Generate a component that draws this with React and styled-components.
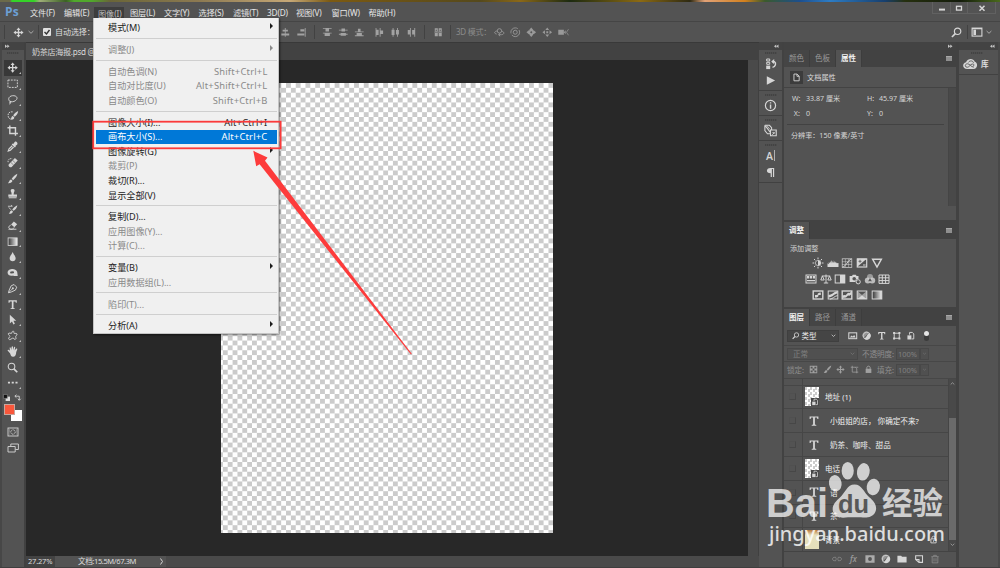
import React from 'react';
import styled, { createGlobalStyle } from 'styled-components';

const Global = createGlobalStyle`
  * { box-sizing: border-box; }
  html, body { margin: 0; padding: 0; background: #535353; overflow: hidden; }
  body { font-family: "Noto Sans", "Noto Sans CJK SC", sans-serif; font-size: 8px; color: #e0e0e0; white-space: nowrap; }
`;

/* ---------- icons, each on a 12x12 grid ---------- */
const S = { fill: 'none', stroke: 'currentColor', strokeWidth: 1 };
const MOVE = <path fill="currentColor" d="M6 .5 8.2 3.2H6.7V5.3H8.8V3.8L11.5 6 8.8 8.2V6.7H6.7V8.8H8.2L6 11.5 3.8 8.8H5.3V6.7H3.2V8.2L.5 6 3.2 3.8V5.3H5.3V3.2H3.8Z" />;
const T_ICON = <path fill="currentColor" d="M1.6 1.4H10.4V4H9.4L8.9 2.6H6.9V9.6L8.3 10V10.7H3.7V10L5.1 9.6V2.6H3.1L2.6 4H1.6Z" />;
const BRUSH = <><path fill="currentColor" d="M11 .8C8.5 2 6 4.4 5 6.2L6.5 7.6C8.6 6 10.8 3.2 11 .8Z" /><path fill="currentColor" d="M4.4 6.8 5.8 8.2C5.5 10 3.6 11 1 10.8 2.4 9.8 2.2 7.2 4.4 6.8Z" /></>;
const ICONS = {
  move: MOVE,
  marquee: <rect x="1" y="2.2" width="10" height="7.8" {...S} strokeDasharray="2 1.1" />,
  lasso: <path {...S} d="M4 8.2C.5 7 1.2 2.2 6 1.8 10 1.5 11.5 4 10.2 5.8 9 7.8 6 8.6 4 8.2 2.4 7.5 2 9.2 3.6 9.2 4.6 9 4 7.5 3.2 7.4M3.6 9.2 2.8 11" />,
  quick: <><path {...S} strokeDasharray="1.6 1" d="M6 2C2 1.5 .8 4 1.2 6.5 1.6 9 3.5 10 5.4 9.6" /><path fill="currentColor" d="M11.8 1C9.3 2.2 7.4 4.2 6.6 5.8L8.2 7.2C10.200 5.600 11.700 3.400 11.800 1ZM6.100 6.300 7.700 7.700C7.900 9.900 5.800 10.600 3.600 10 5 9.200 4.300 6.700 6.100 6.300Z" /></>,
  crop: <path {...S} strokeWidth="1.5" d="M3 .5V9H11.6M.5 3H9V11.5" />,
  dropper: <><path fill="currentColor" d="M8.2 1C9.4-.2 12 2 10.9 3.6L8.9 5.4 9.4 6 8.3 7 5 3.8 6 2.7 6.6 3.2Z" /><path {...S} strokeWidth="1.300" d="M5.6 5 2.2 8.4 1.4 10.6 3.6 9.8 7 6.4" /></>,
  heal: <><path fill="currentColor" d="M8.400 1 11.400 3.800 5 10.500C3.400 12 .6 9.300 2 7.700Z" /><path stroke="#535353" strokeWidth=".6" d="m6 3.600 3 2.800M4 5.700l3 2.800" /><path {...S} strokeDasharray="1.3 .8" d="M1.2 5.5C.5 3 3 1 5.5 2" /></>,
  brush: BRUSH,
  stamp: <path fill="currentColor" d="M6 1C8.3 1 8.5 3 7.4 4.5L7 7H10.6V9.2H1.4V7H5L4.6 4.5C3.5 3 3.7 1 6 1ZM1.8 9.9H10.2V10.9H1.8Z" />,
  history: <><path fill="currentColor" d="M11 1.2C8.6 2.4 6.6 4.3 5.6 6L7 7.3C9 5.8 10.9 3.5 11 1.2ZM5 6.6 6.3 7.9C6 9.8 4 10.8 1.8 10.4 3.2 9.4 2.9 7.1 5 6.6Z" /><path {...S} strokeWidth=".9" d="M1 2.4H5.6L4.4 1M2 3.6 4 6" /></>,
  eraser: <><path fill="currentColor" d="M7.3 1.7 10.8 4.6 7.8 7.8 4.4 4.7Z" /><path {...S} d="M4 5 1.6 7.6 3.6 9.8H5.8L7.6 7.9M1.6 9.8H10" /></>,
  grad: <><defs><linearGradient id="tg"><stop stopColor="#333" /><stop offset="1" stopColor="#f0f0f0" /></linearGradient></defs><rect x="1.2" y="2" width="9.6" height="8" fill="url(#tg)" stroke="currentColor" strokeWidth=".9" /></>,
  drop: <path fill="currentColor" d="M6 1C7 3.6 9.2 5.4 9.2 7.8 9.2 9.8 7.8 11 6 11S2.8 9.8 2.8 7.8C2.8 5.4 5 3.6 6 1Z" />,
  dodge: <path fill="currentColor" fillRule="evenodd" d="M4.2 2.300C7 1.500 9.600 2.700 10.800 5L11.400 9.600H7.200L6.600 8.900C4 9.700.6 8.800.6 5.800.6 4 2.400 2.500 4.200 2.300ZM4 4.8C3 5 3 6.8 4.2 6.9L7 6.6C8 6 7.4 4.6 6.4 4.6Z" />,
  pen: <><path {...S} d="M7.5 1.6 10.3 4.4 9 7.5 4.4 9.6 1.5 10.4 2.4 7.4 4.4 3Z" /><path {...S} strokeWidth=".8" d="M2 10 5.6 6.3" /><circle cx="6.2" cy="5.7" r="1.1" fill="currentColor" /></>,
  type: T_ICON,
  arrow: <path fill="currentColor" d="M3 .8 9.8 7.2H6.8L8.4 10.4 6.8 11.1 5.3 7.9 3 10Z" />,
  shape: <path {...S} d="M6.8 1.2C8 1.8 6.6 4 8.2 3.8 10 3 11.2 4.2 10.4 5.4 8.8 6.4 9.2 7 9.6 9 9 10.6 7.4 10 6.8 8.6 5.4 8.4 5.2 9.6 2.8 10.2.8 9.8 2 8 3.2 7 3 5.6 1.2 5.4 1.4 3.8 2.4 2.6 4 4 5 3.4 5.4 2.2 5.6 1 6.8 1.2Z" />,
  hand: <path fill="currentColor" d="M3.2 7.600.6 4.900C.6 3.700 2.100 3.900 3.200 5.100L2.800 2.100C3 .9 4.200 1.200 4.500 4.400L4.900 1C5.300 0 6.300.2 6.400 1.200V4.300L7.400 1.300C7.900.4 8.800.8 8.700 1.800L8.100 4.700 9.600 2.900C10.400 2.200 11.200 2.900 10.800 3.900L9.800 6.300C9.700 9.300 8.700 11.500 6.400 11.500 4.300 11.500 3.900 9.600 3.200 7.600Z" />,
  zoom: <><circle cx="4.8" cy="4.8" r="3.5" {...S} strokeWidth="1.100" /><path {...S} strokeWidth="1.8" d="m7.3 7.3 3.6 3.6" /></>,
  dots: <path fill="currentColor" d="M1 5H3.2V7H1ZM5 5H7.2V7H5ZM9 5H11.2V7H9Z" />,
  mask: <><rect x="1" y="2" width="10" height="8" {...S} strokeWidth=".9" /><circle cx="6" cy="6" r="2.2" {...S} strokeWidth=".9" strokeDasharray="1 .5" /><path {...S} strokeWidth=".5" strokeDasharray=".6 .6" d="M2.5 3V9M9.5 3V9" /></>,
  screen: <path {...S} strokeWidth=".9" d="M3.8 4V2H11.4V7.5H8.5M1 4.5H8.2V10H1Z" />,
  alignC: <path fill="currentColor" d="M5.5 1h1v10h-1ZM3 3h6v2.2H3ZM1.5 7.5h9V9.7h-9Z" />,
  alignR: <path fill="currentColor" d="M10 1h1v10h-1ZM5 2.7h4.5V5H5ZM1.5 7.3h8V9.6h-8Z" />,
  distT: <path fill="currentColor" d="M1 1h10v1H1ZM1 6.500h10v1H1ZM4 2h4v3H4ZM3 7.500h6v2.800H3Z" />,
  distM: <path fill="currentColor" d="M1 3h10v1H1ZM1 7.8h10v1H1ZM4 1.600h4v3.600H4ZM3 6.900h6v3H3Z" />,
  distB: <path fill="currentColor" d="M1 5h10v1H1ZM1 9.500h10v1H1ZM4.500 2h3V5h-3ZM3 6.900h6v2.600H3Z" />,
  distL: <path fill="currentColor" d="M1.8 1h1v10h-1ZM6.5 1h1v10h-1ZM2.8 3h2.5v6H2.8ZM7.5 4h2.900v4H7.5Z" />,
  distC: <path fill="currentColor" d="M3 1h1v10H3ZM8 1h1v10H8ZM1.8 3h3.4v6H1.8ZM6.8 3.5h3.4v5H6.8Z" />,
  distR: <path fill="currentColor" d="M4.5 1h1v10h-1ZM9.5 1h1v10h-1ZM2 3.5h2.5v5H2ZM7 3.5h2.5v5H7Z" />,
  auto: <path fill="currentColor" fillRule="evenodd" d="M2 1.5h3.5v9H2ZM6.5 1.5H10v9H6.5ZM3 3h1.5v1.2H3ZM7.6 3h1.4v1.2H7.6ZM1.5 5.5h9v.8h-9Z" />,
  orbit: <><path {...S} d="M3 8C-.5 7.5.3 4.5 4 4.600M8.8 4.8C12.200 5.500 12 8.600 8.400 8.800H5.600M7 7.200 5.200 8.800 7 10.500" /><circle cx="6.2" cy="4.4" r="2.5" {...S} /></>,
  roll: <><circle cx="6" cy="6" r="5" {...S} strokeDasharray="12 2" /><circle cx="6" cy="6" r="2.300" {...S} /></>,
  slide: <path fill="currentColor" fillRule="evenodd" d="M6 .5 8.200 3.200 8 4 8.800 3.800 11.500 6 8.800 8.200 8 8 8.200 8.800 6 11.500 3.800 8.800 4 8 3.200 8.200.5 6 3.200 3.800 4 4 3.800 3.200ZM6 4.700 4.700 6 6 7.300 7.300 6Z" />,
  pan3d: <path fill="currentColor" d="M6 .5 8.200 3.400H3.800ZM6 11.500 3.800 8.600H8.200ZM.5 6 3.400 3.800V8.200ZM11.500 6 8.600 8.200V3.800ZM4.900 4.900h2.200v2.200H4.900Z" />,
  cam: <><path fill="currentColor" d="M.3 3.200H6.700V8.800H.3ZM6.7 6 8.700 3.700V8.300Z" /><path {...S} strokeWidth=".8" d="M12 2.5 9.700 6 12 9.5" /></>,
  search: <><circle cx="7.2" cy="4.7" r="3.5" {...S} strokeWidth="1.3" /><path {...S} strokeWidth="1.8" d="M4.7 7.2 1 10.900" /></>,
  work: <><rect x="1.1" y="2.1" width="9.8" height="8" {...S} strokeWidth="1.1" /><path fill="currentColor" d="M2.4 3.8H5V9H2.4ZM1 2h10v1.2H1Z" /></>,
  down: <path {...S} d="m3.6 5 2.4 2.3L8.4 5" />,
  up: <path {...S} d="m3.6 7.3 2.4-2.3 2.4 2.3" />,
  hist2: <><path fill="currentColor" d="M1.2 7.6h4v3.5h-4Z" /><path {...S} d="M1.7 1h3v2h-3ZM1.7 4.3h3v2h-3Z" /><path {...S} strokeWidth="1.400" d="M7 3.6H9.4C11.6 5 10.6 8.6 7.5 9.400" /><path fill="currentColor" d="M6.2 3.6 9.200 1V6.200Z" /></>,
  play: <path fill="currentColor" d="M2 1.300 11 6 2 10.700Z" />,
  info: <><circle cx="6" cy="6" r="4.7" {...S} strokeWidth="1.100" /><path fill="currentColor" d="M5.4 2.9h1.3v1.3H5.4ZM5.4 5h1.3v4H5.4Z" /></>,
  presets: <><path {...S} d="M.8 1.2H5L7 3.4V6M.8 1.2V6L3.2 9H6M1.5 2 6 8M6 5.6H11.3V10.8H6ZM8 7.5l1.5 1.6" /><path {...S} strokeWidth=".7" d="M10.5 7.2 7 10.400M2.500 1.200 5.500 5" /></>,
  para: <path fill="currentColor" d="M10 1V11H8.7V2.2H7.5V11H6.2V6.8C.8 6.8.8 1 6 1Z" />,
  doc: <path {...S} strokeWidth="1.2" d="M2.6 1.4H6.8L9.6 4.2V10.4H2.6ZM6.6 1.4V4.4H9.6" />,
  cc: <><path fill="currentColor" d="M3.500 10.300C-.6 10.300-1 5.300 2.600 4.600 4 1 8.800.8 10.100 4 13 4.800 12.800 10 9 10.300Z" /><path fill="none" stroke="#5a5a5a" strokeWidth=".8" d="M9.300 8.700C6.800 8.600 5.800 5.800 3.800 5.800 1.400 5.900 1.400 8.800 3.600 8.800 5.800 8.700 6 6 8.300 6 9.700 6.100 9.800 7.500 8.600 7.600M4.600 4.700C5.800 2.700 8.600 3 9 5" /></>,
  sun: <><path {...S} d="M6 .5V2.3M6 9.7v1.8M.5 6H2.3M9.7 6h1.8M2 2l1.3 1.3M8.7 8.7 10 10M10 2 8.7 3.3M3.3 8.7 2 10" /><path fill="currentColor" d="M6 3A3 3 0 0 1 6 9Z" /><path {...S} strokeWidth=".7" d="M6 3.400A2.600 2.600 0 0 0 6 8.600" /></>,
  levels: <path fill="currentColor" d="M.5 10V6.2l1.3 1V5l1.2 1.3V4l1.2 2.3V3l1.3 3V4l1.3 2V3.300l1.2 2.700V4.500l1.3 2V5.500l1.4.8L11.500 6V10Z" />,
  curves: <><rect x="1.2" y="1.8" width="9.6" height="8.6" {...S} strokeWidth=".7" /><path {...S} strokeWidth=".5" d="M4.4 2V10M7.6 2V10M1 4.7H11M1 7.5H11" /><path {...S} d="M1.4 10C5.5 9.5 6.5 3 10.5 2" /></>,
  expo: <><rect x="1.3" y="2" width="9.4" height="8" {...S} strokeWidth="1.200" /><path fill="currentColor" d="M1 1.6H11L1 10Z" /><path {...S} d="M7 8h2.6" /><path stroke="#535353" strokeWidth=".8" d="M2.500 4.300h3M4 2.800v3" /></>,
  vib: <path {...S} strokeWidth="1.4" d="M1.6 2.2H10.4L6 10Z" />,
  hue: <><rect x="1" y="2" width="10" height="8" {...S} /><path fill="currentColor" d="M2 3h2.3v2.6H2ZM5 3h2v2.6H5ZM7.8 3H10v2.6H7.8ZM2 7h8v1.2H2Z" /></>,
  balance: <path {...S} d="M6 1.5V10M1.8 3H10.2M2.4 3 .8 7H4.2ZM9.6 3 7.8 7H11.2ZM3.8 10H8.2" />,
  bw: <><rect x="1.2" y="2" width="9.6" height="8" {...S} /><path fill="currentColor" d="M6 2h5v8H6Z" /></>,
  photo: <><path fill="currentColor" fillRule="evenodd" d="M.6 3H3L3.8 1.8H6.8L7.6 3H9.5V6A3 3 0 0 0 6.4 9H.6ZM5.2 4A1.8 1.8 0 1 0 5.2 7.6 1.8 1.8 0 0 0 5.2 4Z" /><circle cx="9.2" cy="8.8" r="2.1" {...S} /></>,
  mixer: <><circle cx="6" cy="4" r="3" fill="currentColor" opacity=".55" /><circle cx="3.800" cy="7.600" r="3" fill="currentColor" opacity=".8" /><circle cx="8.200" cy="7.600" r="3" fill="currentColor" opacity=".8" /><path fill="#535353" d="M6 5 7.800 8.200H4.200Z" /></>,
  lut: <path {...S} d="M1 2H11V10.4H1ZM4.3 2V10.4M7.6 2V10.4M1 4.8H11M1 7.6H11" />,
  invert: <><rect x="1.2" y="2" width="9.6" height="8" {...S} strokeWidth="1.4" /><path fill="currentColor" d="M3 8.6V6H5.5C5.5 4.3 6.3 3.4 8.8 3.4V6H6.5C6.5 8 5.5 8.6 3 8.6Z" /></>,
  poster: <><rect x="1.2" y="2" width="9.6" height="8" {...S} /><path fill="currentColor" d="M1.4 6C5 6 6 3 10.600 2V4.500C7 5 6 8 1.400 8.700Z" /><path {...S} d="M3 10.2C6 9.600 7 7.500 10.600 6.500" /></>,
  thresh: <><rect x="1.2" y="2" width="9.6" height="8" {...S} strokeWidth="1.4" /><path fill="currentColor" d="M1.400 9V6.500L3.400 6 4.600 6.300 7 3.800 8.400 4 10.600 2.600V5.300L8.400 6.700 7 6.500 5 8.600Z" /></>,
  selcol: <><rect x="1.2" y="2" width="9.6" height="8" {...S} /><path fill="currentColor" d="M1.2 2 6 6 1.2 10ZM10.8 2 6 6 10.8 10Z" opacity=".6" /><path fill="currentColor" d="M1.2 10 6 6 10.8 10Z" /></>,
  gmap: <><defs><linearGradient id="gm"><stop stopColor="#333" /><stop offset="1" stopColor="#f0f0f0" /></linearGradient></defs><rect x="1.2" y="2" width="9.6" height="8" fill="url(#gm)" stroke="currentColor" /></>,
  image: <><rect x="1" y="2.300" width="10" height="7.400" {...S} strokeWidth="1.300" /><path fill="currentColor" d="M2.3 8.3 4.5 5.6 6 7 7.8 5 9.7 8.3Z" /></>,
  half: <><circle cx="6" cy="6" r="4.5" {...S} /><path fill="currentColor" d="M9.400 2.600A4.800 4.800 0 1 1 2.600 9.400C6 9 6 4 9.400 2.600Z" /><path fill="currentColor" opacity=".5" d="M2 9A4.800 4.800 0 0 1 9 2Z" /></>,
  frame: <><path {...S} strokeWidth="1.200" d="M2.8 2.8H9.2V9.2H2.8Z" /><path fill="currentColor" d="M1.4 1.4h2.5v2.5H1.4ZM8.1 1.4h2.5v2.5H8.1ZM1.4 8.1h2.5v2.5H1.4ZM8.1 8.1h2.5v2.5H8.1Z" /></>,
  smart: <><path {...S} strokeWidth="1.200" d="M4.5 4.6V1.8H8L9.8 3.6V10H7.2" /><path fill="currentColor" d="M1.800 5.5H6.8V10.700H1.800Z" /></>,
  lockpx: <path fill="currentColor" fillRule="evenodd" d="M1 1h10v10H1ZM2.2 2.2V4.600H4.800V2.200ZM7.2 2.200V4.600H9.800V2.200ZM4.800 4.8V7.2H7.2V4.8ZM2.2 7.4V9.800H4.8V7.4ZM7.2 7.4V9.800H9.800V7.4Z" />,
  artb: <path {...S} d="M3 1V9.5H11M1 3H7L9 5V11M7 3H11" />,
  lock: <><rect x="2.2" y="5" width="7.6" height="5.6" fill="currentColor" /><path {...S} strokeWidth="1.3" d="M3.8 5.2V3.6C3.8.9 8.2.9 8.2 3.6V5.2" /></>,
  lockLine: <path {...S} strokeWidth="1.200" d="M2.500 5.200H9.500V10.500H2.500ZM4 5.200V3.600C4 1 8 1 8 3.600V5.200M6 7v2" />,
  link: <path {...S} d="M5 4H2.800C0 4 0 8 2.800 8H5M7 4H9.200C12 4 12 8 9.200 8H7M4 6h4" />,
  addmask: <path fill="currentColor" fillRule="evenodd" d="M.5 1.500H11.500V10.500H.5ZM6 3.7A2.3 2.3 0 1 0 6 8.3 2.3 2.3 0 0 0 6 3.7Z" />,
  folder: <path fill="currentColor" d="M.5 2H5L6 3.2H11.500V10.300H.5Z" />,
  newl: <path {...S} strokeWidth="1.3" d="M2 2H10.2V10H6L2 6.6ZM2 6.6H6V10" />,
  trash: <path {...S} d="M1.6 3.2H10.4M4.4 3V1.6H7.6V3M2.6 3.4V10.6H9.4V3.4M4.8 5V9M7.2 5V9" />,
};
const Glyph = styled.svg`
  display: block; flex: none; overflow: visible;
  width: ${p => p.$s || 12}px; height: ${p => p.$s || 12}px; color: ${p => p.$c || '#d6d6d6'};
`;
const Icon = ({ n, s, c }) => <Glyph $s={s} $c={c} viewBox="0 0 12 12">{ICONS[n]}</Glyph>;

/* ---------- frame ---------- */
const Window = styled.div`width: 1000px; height: 568px; position: relative; display: flex; flex-direction: column; overflow: hidden; background: #484848;`;
const Desktop = styled.div`
  height: 2px; flex: none;
  background: linear-gradient(90deg, #6c6a4a 0 10px, #35d328 12px 34px, #9fae78 40px, #3b6124 66px, #51a82c 74px 92px, #6a6538 110px, #8d7a52 200px, #c6a877 290px, #7c5a12 330px, #55491c 480px, #8b6818 520px, #1c2a10 570px, #8c6a13 640px, #2e2a12 690px, #e2a277 705px, #d2801d 745px, #3b5a2c 765px, #1c4f8f 800px, #2d7cc4 830px, #173f6e 885px, #26300f 905px, #131b0b 960px, #4a6a1c 1000px);
`;
const MenuBar = styled.div`height: 19px; flex: none; display: flex; align-items: center; background: #535353; padding-left: 5px;`;
const Logo = styled.div`width: 20px; font: bold 12px/18px "Open Sans", sans-serif; color: #6c9fd3; letter-spacing: .2px;`;
const MenuEntry = styled.div`
  width: ${p => p.$w}px; height: 14px; line-height: 13px; padding-left: 4px; font-size: 8.2px; letter-spacing: -.12px; align-self: flex-end; margin-bottom: ${p => (p.$on ? 0 : 1)}px;
  background: ${p => (p.$on ? '#3d3d3d' : 'transparent')}; color: ${p => (p.$on ? '#bdbdbd' : '#e6e6e6')};
`;
const WinButtons = styled.div`margin: 0 4px 7px auto; display: flex; height: 12px; border: 1px solid #616161; border-top: 0;`;
const WinButton = styled.div`width: ${p => p.$w}px; display: flex; align-items: center; justify-content: center; border-left: ${p => (p.$first ? 0 : 1)}px solid #616161;`;

const OptionsBar = styled.div`height: 21px; flex: none; display: flex; align-items: center; background: #535353; border-top: 1px solid #454545; padding-left: 4px;`;
const Gap = styled.div`width: ${p => p.$w}px; flex: none;`;
const VLine = styled.div`width: 1px; height: 14px; background: #424242; flex: none;`;
const OptionSlot = styled.div`width: ${p => p.$w || 16}px; display: flex; justify-content: center; flex: none;`;
const Check = styled.div`width: 8px; height: 8px; background: #e2e2e2; border-radius: 1px; display: flex;`;
const OptionText = styled.div`font-size: 8px; line-height: 12px; color: ${p => (p.$dim ? '#8b8b8b' : '#dedede')}; width: ${p => p.$w}px; flex: none; letter-spacing: ${p => (p.$dim ? -.25 : -.05)}px;`;

const Body = styled.div`flex: 1; min-height: 0; display: flex; border-bottom: 1px solid #3e3e3e;`;
const Head = styled.div`height: 8px; flex: none; background: #434343; color: #bcbcbc; display: flex; align-items: center; justify-content: ${p => (p.$left ? 'flex-start' : 'flex-end')}; padding: 0 ${p => p.$p ?? 4}px;`;
const Grip = styled.div`height: 2px; width: 12px; margin: ${p => p.$m || '2px auto 0'}; flex: none; background: repeating-linear-gradient(90deg, #434343 0 1px, #4d4d4d 1px 2px);`;
const Chevrons = ({ back }) => (
  <Glyph $s={4.5} viewBox="0 0 10 10" $c="#c4c4c4"><path fill="currentColor" d={back ? 'M5 1V9L0 5ZM10 1V9L5 5Z' : 'M0 1 5 5 0 9ZM5 1 10 5 5 9Z'} /></Glyph>
);

/* ---------- tools ---------- */
const ToolBar = styled.div`width: 26px; flex: none; background: #535353; border-left: 2px solid #474747; border-right: 2px solid #414141; display: flex; flex-direction: column;`;
const Tools = styled.div`padding: 6px 2px 0; display: flex; flex-direction: column;`;
const Tool = styled.div`
  height: 15.75px; width: 18px; padding: 2.2px 3.2px; background: ${p => (p.$on ? '#383838' : 'none')}; background-clip: padding-box;
  display: flex; align-items: flex-end;
`;
const Corner = styled.div`flex: none; width: 0; height: 0; border: 1px solid transparent; border-right-color: #bbb; border-bottom-color: #bbb; margin: 0 0 -.5px 1px;`;
const MiniRow = styled.div`display: flex; gap: 4px; padding-top: 3px; height: 13px; margin-left: -1px;`;
const Swatches = styled.div`display: grid; grid-template: 6px 5px 6px / 7px 4px 7px; padding-left: 2px;`;
const Fore = styled.div`grid-area: 1 / 1 / 3 / 3; background: #f9573b; border: 1px solid #c9a59c; z-index: 1;`;
const Back = styled.div`grid-area: 2 / 2 / 4 / 4; background: #fff;`;
const ModeIcons = styled.div`display: flex; flex-direction: column; gap: 4px; padding: 5px 0 0 5px;`;

/* ---------- document ---------- */
const Doc = styled.div`width: 733px; flex: none; display: flex; flex-direction: column;`;
const DocTabs = styled.div`height: 18px; flex: none; background: #424242; border-top: 1px solid #393939;`;
const DocTab = styled.div`width: 160px; height: 17px; padding-left: 6px; background: #4f4f4f; font-size: 8.1px; letter-spacing: -.32px; line-height: 17px; color: #d8d8d8;`;
const Stage = styled.div`flex: 1; display: flex; background: #282828;`;
const Paper = styled.div`
  margin: 23.3px 0 0 194.5px; width: 332.3px; height: 450px; flex: none;
  background: conic-gradient(#cbcbcb 25%, #fff 0 50%, #cbcbcb 0 75%, #fff 0) right top / 9.73px 9.73px;
`;
const VScroll = styled.div`margin-left: auto; width: 11px; background: #4a4a4a; border-right: 1px solid #404040;`;
const Status = styled.div`height: 11px; flex: none; display: flex; background: #4a4a4a; font: 7.6px/11px "Noto Sans", "Noto Sans CJK SC", sans-serif; color: #dcdcdc;`;
const Zoom = styled.div`width: 29px; padding-left: 2px; background: #434343; letter-spacing: -.25px;`;
const DocSize = styled.div`width: 111px; padding: 0 0 0 23px; background: #535353; display: flex; justify-content: space-between; letter-spacing: -.42px;`;

/* ---------- side docks ---------- */
const Rail = styled.div`width: 23px; flex: none; background: #535353; display: flex; flex-direction: column;`;
const RailGroup = styled.div`height: ${p => p.$h}px; border-bottom: 1px solid #414141; display: flex; flex-direction: column; align-items: center; gap: 5px;`;
const Letter = styled.div`height: 12px; font: 600 10.5px/12px "Open Sans", sans-serif; color: #d6d6d6; display: flex; gap: 1px; &::after { content: ''; width: 1px; height: 11px; background: #b0b0b0; }`;
const Dock = styled.div`width: 174px; flex: none; background: #424242; padding: 0 0 0 2px; display: flex; flex-direction: column;`;
const Panel = styled.div`height: ${p => p.$h}px; flex: none; margin-bottom: 2px; background: #535353; display: flex; flex-direction: column;`;
const Tabs = styled.div`height: 17px; flex: none; background: #424242; display: flex; padding-right: 4px; align-items: center;`;
const Tab = styled.div`width: 26px; height: 17px; font-size: 7.5px; line-height: 16px; text-align: center; color: ${p => (p.$on ? '#f2f2f2' : '#989898')}; font-weight: ${p => (p.$on ? 600 : 400)}; background: ${p => (p.$on ? '#535353' : '#454545')}; border-right: 1px solid #3d3d3d;`;
const Burger = styled.div`margin-left: auto; width: 6px; height: 5px; background: #8f8f8f; border-top: 1px solid #a8a8a8;`;
const DocHead = styled.div`height: 21px; flex: none; border-bottom: 1px solid #434343; display: flex; align-items: center; gap: 4px; padding-left: 6px; font-size: 7.2px; color: #dadada;`;
const DocIcon = styled.div`width: 13px; height: 13px; background: #3c3c3c; display: flex; align-items: center; justify-content: center;`;
const PropBody = styled.div`flex: 1; display: flex; justify-content: space-between;`;
const PropList = styled.div`width: 160px; padding: 2px 0 0 3px; font-size: 7.1px; color: #d6d6d6;`;
const PropRow = styled.div`display: grid; grid-template-columns: 14px 61px 12px auto; height: 15px; align-items: center; padding-left: 5px;`;
const Rule = styled.div`height: 1px; background: #424242; margin: 4px 0 4px;`;
const Resolution = styled.div`padding-left: 4px; line-height: 12px;`;
const Track = styled.div`width: 8px; height: ${p => p.$h}; background: #494949; border-left: 1px solid #454545; display: flex; flex-direction: column; flex: none; align-items: center;`;
const AdjustTitle = styled.div`padding: 4px 0 0 6px; font-size: 7.1px; line-height: 11px; color: #d2d2d2; height: 16px;`;
const AdjustRow = styled.div`display: flex; gap: 2.7px; height: 16.2px; align-items: center; padding-left: ${p => p.$p}px;`;

const FilterRow = styled.div`height: 20px; flex: none; display: flex; align-items: center; border-bottom: 1px solid #474747; padding-left: 3px;`;
const OptRow = styled(FilterRow)`height: 16.3px; font-size: 7.6px; color: #8e8e8e;`;
const Select = styled.div`width: ${p => p.$w}px; height: 12px; display: flex; align-items: center; padding-left: ${p => p.$p || 3}px; border: 1px solid ${p => (p.$dim ? '#484848' : '#3f3f3f')}; background: ${p => (p.$dim ? '#505050' : '#454545')}; color: ${p => (p.$dim ? '#808080' : '#eee')}; font-size: 7.5px; line-height: 10px; svg:last-child { margin-left: auto; }`;
const Label = styled.div`width: ${p => p.$w}px; flex: none; letter-spacing: -.1px;`;
const Toggle = styled.div`width: 5px; height: 10px; border-radius: 3px; background: #3c3c3c; margin-left: 6px; &::before { content: ''; display: block; width: 5px; height: 5px; border-radius: 50%; background: #e6e6e6; }`;
const LayerArea = styled.div`height: 173px; flex: none; display: flex; border-bottom: 1px solid #434343;`;
const LayerList = styled.div`flex: 1; padding-top: 6px; background: linear-gradient(#464646, #464646) 18px 0 / 1px 100% no-repeat;`;
const Layer = styled.div`height: 23.8px; border-top: 1px solid #464646; display: flex; align-items: center; font-size: 7.6px; color: #efefef;`;
const Eye = styled.div`width: 7px; height: 7px; margin: 0 8px 0 5px; border: 1px solid #474747; border-top-color: #505050; border-left-color: #505050; flex: none;`;
const Thumb = styled.div`
  width: 14px; height: 19px; margin: 0 6px 0 1px; flex: none; display: flex; align-items: flex-end; justify-content: flex-end;
  background: ${p => (p.$bg ? 'linear-gradient(#b9793f, #e6e0bd 5px, #e4dfbb)' : 'conic-gradient(#fff 25%, #ccc 0 50%, #fff 0 75%, #ccc 0) 0 0 / 5px 5px')};
`;
const Badge = styled.div`width: 8px; height: 8px; background: #484848; display: flex; align-items: center; justify-content: center;`;
const TypeThumb = styled.div`width: 12px; margin: 0 10px 0 4px; flex: none;`;
const LayerLock = styled.div`margin-left: auto; padding-right: 10px;`;
const ThumbBar = styled.div`width: 7px; height: 122px; margin-top: 30px; flex: none; background: #6a6a6a;`;
const Footer = styled.div`flex: 1; display: flex; align-items: center; justify-content: flex-end; gap: 6.3px; padding-right: 16px;`;
const Fx = styled.div`width: 10px; font: italic 600 8px/10px "Open Sans", sans-serif; color: #9a9a9a; text-align: center;`;

const Library = styled.div`flex: 1; background: #535353; border-left: 3px solid #424242; border-right: 2px solid #484848; display: flex; flex-direction: column;`;
const LibItem = styled.div`height: 25px; border-bottom: 1px solid #424242; display: flex; flex-direction: column;`;
const LibRow = styled.div`display: flex; align-items: center; padding: 3px 0 0 4px; gap: 4px; font-size: 7.6px; font-weight: 600; line-height: 14px;`;

/* ---------- dropdown ---------- */
const Menu = styled.div`
  position: absolute; left: 93px; top: 18px; width: 186px; height: 316px; padding: 2.9px 1.5px 0 2px; background: #f0f0f0; border: 1px solid #c4c4c4; border-width: 0 1px 1px;
  box-shadow: 1px 1px 2px rgba(0,0,0,.55); color: #1e1e1e;
`;
const Item = styled.div`
  height: 14.6px; padding: 0 9px 0 12px; display: flex; align-items: center; justify-content: space-between; font-size: 9.15px; line-height: 14px; position: relative;
  color: ${p => (p.$sel ? '#fff' : p.$off ? '#8a8a8a' : '#1c1c1c')}; background: ${p => (p.$sel ? '#0078d7' : 'none')};
`;
const Keys = styled.span`letter-spacing: .2px; font-size: 9.4px;`;
const Sub = styled.span`width: 0; height: 0; border: 3px solid transparent; border-left: 3.8px solid currentColor; border-right: 0; margin: -4px -5px 0 0;`;
const Sep = styled.div`height: 7.15px; padding: 2.4px 0 0; &::before { content: ''; display: block; height: 1px; background: #cfcfcf; }`;
const Overlay = styled.svg`position: absolute; inset: 0; width: 1000px; height: 568px; pointer-events: none;`;

const MENU = [['文件(F)', 34], ['编辑(E)', 34], ['图像(I)', 30, 1], ['图层(L)', 34], ['文字(Y)', 34.5], ['选择(S)', 34.5], ['滤镜(T)', 34], ['3D(D)', 29], ['视图(V)', 35.5], ['窗口(W)', 37], ['帮助(H)', 40]];
const ITEMS = [
  { t: '模式(M)', sub: 1 }, 0, { t: '调整(J)', off: 1, sub: 1 }, 0,
  { t: '自动色调(N)', off: 1, k: 'Shift+Ctrl+L' }, { t: '自动对比度(U)', off: 1, k: 'Alt+Shift+Ctrl+L' }, { t: '自动颜色(O)', off: 1, k: 'Shift+Ctrl+B' }, 0,
  { t: '图像大小(I)...', k: 'Alt+Ctrl+I' }, { t: '画布大小(S)...', k: 'Alt+Ctrl+C', sel: 1 }, { t: '图像旋转(G)', sub: 1 }, { t: '裁剪(P)', off: 1 }, { t: '裁切(R)...' }, { t: '显示全部(V)' }, 0,
  { t: '复制(D)...' }, { t: '应用图像(Y)...', off: 1 }, { t: '计算(C)...', off: 1 }, 0,
  { t: '变量(B)', sub: 1 }, { t: '应用数据组(L)...', off: 1 }, 0, { t: '陷印(T)...', off: 1 }, 0, { t: '分析(A)', sub: 1 },
];
const TOOLS = ['move', 'marquee', 'lasso', 'quick', 'crop', 'dropper', 'heal', 'brush', 'stamp', 'history', 'eraser', 'grad', 'drop', 'dodge', 'pen', 'type', 'arrow', 'shape', 'hand', 'zoom', 'dots'];
const LAYERS = [['地址 (1)', 'smart'], ['小姐姐的店， 你确定不来?', 'type'], ['奶茶、咖啡、甜品', 'type'], ['电话', 'smart'], ['语', 'type'], ['茶', 'type'], ['背景', 'bg']];
const Slots = ({ names, c }) => names.map(n => <OptionSlot key={n}><Icon n={n} s={10.5} c={c} /></OptionSlot>);

export default function App() {
  return (
    <Window>
      <Global />
      <Desktop />
      <MenuBar>
        <Logo>Ps</Logo>
        {MENU.map(([t, w, on], i) => <React.Fragment key={t}>{i === 0 && <Gap $w={1} />}<MenuEntry $w={w} $on={on}>{t}</MenuEntry>{on && <Gap $w={2} />}</React.Fragment>)}
        <WinButtons>
          <WinButton $first $w={17}><Glyph $s={8} viewBox="0 0 8 8"><path fill="currentColor" d="M1 4.6h6v2H1Z" /></Glyph></WinButton>
          <WinButton $w={17}><Glyph $s={8} viewBox="0 0 8 8"><rect x="1.5" y="2.3" width="5" height="3.8" fill="none" stroke="currentColor" strokeWidth="1.3" /></Glyph></WinButton>
          <WinButton $w={28}><Glyph $s={8} viewBox="0 0 8 8"><path stroke="currentColor" strokeWidth="1.5" d="m1.500 1.700 5 5M6.500 1.700l-5 5" /></Glyph></WinButton>
        </WinButtons>
      </MenuBar>
      <OptionsBar>
        <VLine /><Gap $w={8} /><Icon n="move" s={11} /><Gap $w={1} /><Icon n="down" s={12} c="#aaa" /><Gap $w={1} /><VLine /><Gap $w={4} />
        <Check><Glyph $s={8} viewBox="0 0 8 8"><path d="m1.5 3.900 2 2L6.500 2" fill="none" stroke="#333" strokeWidth="1.4" /></Glyph></Check>
        <Gap $w={4} /><OptionText $w={222}>自动选择：</OptionText>
        <Slots names={['alignC', 'alignR']} c="#a2a2a2" /><Gap $w={5} /><VLine /><Gap $w={4} />
        <Slots names={['distT', 'distM', 'distB']} c="#a2a2a2" /><Gap $w={4} />
        <Slots names={['distL', 'distC', 'distR']} c="#a2a2a2" /><Gap $w={5} /><VLine /><Gap $w={5} />
        <Slots names={['auto']} c="#a2a2a2" /><Gap $w={4} /><VLine /><Gap $w={5} />
        <OptionText $w={35} $dim>3D 模式：</OptionText>
        <Slots names={['orbit', 'roll', 'slide', 'pan3d', 'cam']} c="#999" />
        <Gap $w={380} /><Icon n="search" s={11} /><Gap $w={5} /><VLine /><Gap $w={3} /><Icon n="work" s={12} /><Icon n="down" c="#aaa" />
      </OptionsBar>
      <Body>
        <ToolBar>
          <Head $left $p={3}><Chevrons /></Head>
          <Grip />
          <Tools>
            {TOOLS.map(n => <Tool key={n} $on={n === 'move'}><Icon n={n} s={11.3} />{n !== 'zoom' && <Corner />}</Tool>)}
            <MiniRow>
              <Glyph $s={7} viewBox="0 0 8 8"><path fill="#ddd" d="M3 3h5v5H3Z" /><path fill="#111" stroke="#999" strokeWidth=".6" d="M.5.5h4.500v4.500H.5Z" /></Glyph>
              <Glyph $s={7} viewBox="0 0 8 8"><path fill="none" stroke="currentColor" d="M1 2.500H6V7M2.800.8 1 2.500l1.800 1.700M4.300 5.500 6 7.200 7.700 5.500" /></Glyph>
            </MiniRow>
          </Tools>
          <Swatches><Fore /><Back /></Swatches>
          <ModeIcons><Icon n="mask" s={12} /><Icon n="screen" s={12} /></ModeIcons>
        </ToolBar>
        <Doc>
          <DocTabs><DocTab>奶茶店海报.psd @</DocTab></DocTabs>
          <Stage><Paper /><VScroll /></Stage>
          <Status><Zoom>27.27%</Zoom><DocSize><span>文档:15.5M/67.3M</span><Glyph $s={8} viewBox="0 0 8 8"><path d="m2.500 2.500 2 3-2 3" fill="none" stroke="currentColor" /></Glyph></DocSize></Status>
        </Doc>
        <Rail>
          <Head><Chevrons back /></Head>
          <RailGroup $h={41}><Grip $m="2px 0 -1px" /><Icon n="hist2" /><Icon n="play" s={11} /></RailGroup>
          <RailGroup $h={25}><Grip $m="3px 0 -2px" /><Icon n="info" s={13} /></RailGroup>
          <RailGroup $h={25}><Grip $m="3px 0 -2px" /><Icon n="presets" s={13} /></RailGroup>
          <RailGroup $h={42}><Grip $m="3px 0 -1px" /><Letter>A</Letter><Icon n="para" s={11} /></RailGroup>
        </Rail>
        <Dock>
          <Head><Chevrons /></Head>
          <Panel $h={170}>
            <Tabs><Tab>颜色</Tab><Tab>色板</Tab><Tab $on>属性</Tab><Burger /></Tabs>
            <DocHead><DocIcon><Icon n="doc" s={9} /></DocIcon>文档属性</DocHead>
            <PropBody>
              <PropList>
                <PropRow><span>W:</span><span>33.87 厘米</span><span>H:</span><span>45.97 厘米</span></PropRow>
                <PropRow><span>&nbsp;X:</span><span>0</span><span>Y:</span><span>0</span></PropRow>
                <Rule />
                <Resolution>分辨率：150 像素/英寸</Resolution>
              </PropList>
              <Track $h="118px" />
            </PropBody>
          </Panel>
          <Panel $h={85}>
            <Tabs><Tab $on>调整</Tab><Burger /></Tabs>
            <AdjustTitle>添加调整</AdjustTitle>
            <AdjustRow $p={28}>{['sun', 'levels', 'curves', 'expo', 'vib'].map(n => <Icon key={n} n={n} />)}</AdjustRow>
            <AdjustRow $p={21}>{['hue', 'balance', 'bw', 'photo', 'mixer', 'lut'].map(n => <Icon key={n} n={n} />)}</AdjustRow>
            <AdjustRow $p={28}>{['invert', 'poster', 'thresh', 'selcol', 'gmap'].map(n => <Icon key={n} n={n} />)}</AdjustRow>
          </Panel>
          <Panel $h={258}>
            <Tabs><Tab $on>图层</Tab><Tab>路径</Tab><Tab>通道</Tab><Burger /></Tabs>
            <FilterRow>
              <Select $w={52} $p={4}><Icon n="search" s={7.500} /><Gap $w={2} />类型<Icon n="down" s={9} /></Select><Gap $w={6} />
              {['image', 'half', 'type', 'frame', 'smart'].map(n => <OptionSlot key={n} $w={14.7}><Icon n={n} s={9.500} /></OptionSlot>)}
              <Toggle />
            </FilterRow>
            <OptRow><Select $w={71} $p={5} $dim>正常<Icon n="down" s={9} c="#777" /></Select><Gap $w={4} /><Label $w={34}>不透明度:</Label><Select $w={24} $p={1} $dim>100%</Select><Select $w={9} $p={.1} $dim><Icon n="down" s={7} c="#777" /></Select></OptRow>
            <OptRow><Label $w={20}>锁定:</Label>{['lockpx', 'brush', 'move', 'artb', 'lock'].map(n => <OptionSlot key={n} $w={13.600}><Icon n={n} s={9} c="#a0a0a0" /></OptionSlot>)}<Gap $w={2} /><Label $w={19}>填充:</Label><Select $w={24} $p={1} $dim>100%</Select><Select $w={9} $p={.1} $dim><Icon n="down" s={7} c="#777" /></Select></OptRow>
            <LayerArea>
              <LayerList>
                {LAYERS.map(([t, k]) => (
                  <Layer key={t}><Eye />
                    {k === 'type' ? <TypeThumb><Icon n="type" /></TypeThumb> : <Thumb $bg={k === 'bg'}>{k === 'smart' && <Badge><Icon n="smart" s={8} /></Badge>}</Thumb>}
                    {t}{k === 'bg' && <LayerLock><Icon n="lockLine" s={9} /></LayerLock>}
                  </Layer>
                ))}
              </LayerList>
              <Track $h="172px"><Icon n="up" s={9} c="#aaa" /><ThumbBar /><Icon n="down" s={9} c="#aaa" /></Track>
            </LayerArea>
            <Footer>
              <Icon n="link" s={10} c="#8b8b8b" /><Fx>fx</Fx><Icon n="addmask" s={10} c="#aaa" /><Icon n="half" s={10} /><Icon n="folder" s={10} /><Icon n="newl" s={10} /><Icon n="trash" s={10} c="#8b8b8b" />
            </Footer>
          </Panel>
        </Dock>
        <Library>
          <Head><Chevrons back /></Head>
          <LibItem><Grip $m="2px 0 0 12px" /><LibRow><Icon n="cc" s={14} />库</LibRow></LibItem>
        </Library>
      </Body>
      <Menu>
        {ITEMS.map((it, i) => it === 0 ? <Sep key={i} /> : (
          <Item key={i} $off={it.off} $sel={it.sel}><span>{it.t}</span>{it.k && <Keys>{it.k}</Keys>}{it.sub && <Sub />}</Item>
        ))}
      </Menu>
      <Overlay viewBox="0 0 1000 568">
        <rect x="93.200" y="121.700" width="187.400" height="26.600" fill="none" stroke="#fb3a3a" strokeWidth="1.800" />
        <path fill="#fd3b3b" d="M253.300 150.800 267.500 157.500 265 160.800 411.700 353.800 411 354.500 259.600 164.300 256.200 166.300Z" />
        <g fill="#fff" fillOpacity=".72">
          <text x="766" y="517" fontFamily="Liberation Sans" fontWeight="700" fontSize="41.500" textLength="62" lengthAdjust="spacingAndGlyphs">Bai</text>
          <ellipse cx="847.700" cy="470.800" rx="6.100" ry="8.800" />
          <ellipse cx="863.300" cy="471.800" rx="6.300" ry="8.800" transform="rotate(10 863.300 471.800)" />
          <ellipse cx="835.300" cy="483.300" rx="6.300" ry="8.300" transform="rotate(-10 835.300 483.300)" />
          <ellipse cx="873.300" cy="487" rx="6.600" ry="8.300" transform="rotate(8 873.300 487)" />
          <path d="M854.500 484.500C862 484.500 863.500 492 869 497 874.500 501.500 877.500 506 875.500 511.500 873 518 866 517.800 861 517.300H848C842 518 835 518.300 833 511.500 831.500 505.500 835.500 501.500 840 497.500 845.500 492.500 847 484.500 854.500 484.500Z" />
          <text x="882" y="514" fontFamily="Noto Sans CJK SC" fontWeight="700" fontSize="31" textLength="61" lengthAdjust="spacingAndGlyphs">经验</text>
        </g>
        <text x="838" y="512.500" fill="#585858" fontFamily="Liberation Sans" fontWeight="700" fontSize="25" textLength="31" lengthAdjust="spacingAndGlyphs">du</text>
        <text x="769" y="540.500" fill="#fff" fillOpacity=".82" fontFamily="Noto Sans" fontWeight="500" fontSize="20.500" textLength="176" lengthAdjust="spacingAndGlyphs">jingyan.baidu.com</text>
      </Overlay>
    </Window>
  );
}
